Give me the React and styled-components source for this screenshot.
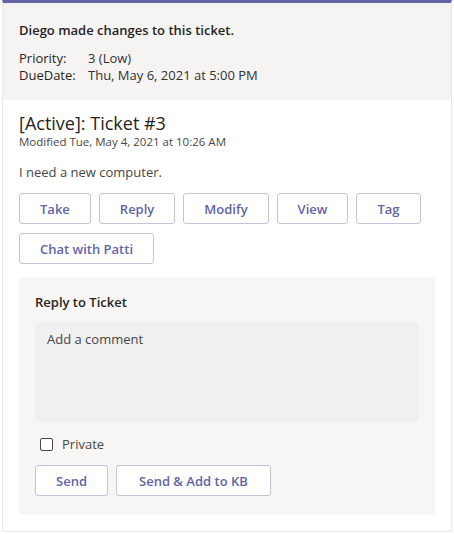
import React from "react";
import styled, { createGlobalStyle } from "styled-components";

const GlobalStyle = createGlobalStyle`
  html, body {
    margin: 0;
    padding: 0;
    background: #ffffff;
  }
  body {
    font-family: "Open Sans", "Noto Sans", sans-serif;
    color: #252423;
  }
`;

const actions = ["Take", "Reply", "Modify", "View", "Tag", "Chat with Patti"];

function App() {
  return (
    <>
      <GlobalStyle />
      <Page>
        <Card>
          <Header>
            <HeaderTitle>Diego made changes to this ticket.</HeaderTitle>
            <FactList>
              <FactLabel>Priority:</FactLabel>
              <FactValue>3 (Low)</FactValue>
              <FactLabel>DueDate:</FactLabel>
              <FactValue>Thu, May 6, 2021 at 5:00 PM</FactValue>
            </FactList>
          </Header>
          <Body>
            <TicketTitle>[Active]: Ticket #3</TicketTitle>
            <Modified>Modified Tue, May 4, 2021 at 10:26 AM</Modified>
            <Description>I need a new computer.</Description>
            <ActionRow>
              {actions.map((label) => (
                <ActionButton key={label}>{label}</ActionButton>
              ))}
            </ActionRow>
            <ReplyPanel>
              <ReplyTitle>Reply to Ticket</ReplyTitle>
              <CommentBox placeholder="Add a comment" />
              <CheckRow>
                <CheckBox type="checkbox" />
                <CheckLabel>Private</CheckLabel>
              </CheckRow>
              <SendRow>
                <ActionButton>Send</ActionButton>
                <ActionButton $pad="22px">Send &amp; Add to KB</ActionButton>
              </SendRow>
            </ReplyPanel>
          </Body>
        </Card>
      </Page>
    </>
  );
}

const Page = styled.div`
  width: 454px;
  height: 534px;
  padding: 0 2px 2px 2px;
  box-sizing: border-box;
`;

const Card = styled.div`
  width: 100%;
  height: 532px;
  box-sizing: border-box;
  border: 1px solid #ebe9e8;
  border-top: 3px solid #6264a7;
  border-radius: 0 0 3px 3px;
  background: #ffffff;
`;

const Header = styled.div`
  background: #f5f4f3;
  padding: 18px 16px 0 16px;
  height: 97px;
  box-sizing: border-box;
`;

const HeaderTitle = styled.div`
  font-size: 13px;
  font-weight: 600;
  line-height: 18px;
`;

const FactList = styled.div`
  display: grid;
  grid-template-columns: 69px 1fr;
  margin-top: 11px;
  font-size: 13px;
  line-height: 17px;
`;

const FactLabel = styled.div`
  font-weight: 400;
`;

const FactValue = styled.div`
  color: #323130;
`;

const Body = styled.div`
  padding: 12px 16px 0 16px;
`;

const TicketTitle = styled.div`
  font-size: 18px;
  line-height: 22px;
`;

const Modified = styled.div`
  font-size: 11.5px;
  line-height: 16px;
  color: #484644;
`;

const Description = styled.div`
  font-size: 13px;
  line-height: 18px;
  color: #484644;
  margin-top: 13px;
`;

const ActionRow = styled.div`
  display: flex;
  flex-wrap: wrap;
  gap: 9px 8px;
  margin-top: 12px;
  width: 420px;
`;

const ActionButton = styled.button`
  height: 31px;
  padding: 0 ${(props) => props.$pad || "20px"};
  box-sizing: border-box;
  background: #ffffff;
  border: 1px solid #c4c3dc;
  border-radius: 3px;
  font-family: "Open Sans", "Noto Sans", sans-serif;
  font-size: 13px;
  font-weight: 600;
  color: #6264a7;
  cursor: pointer;
`;

const ReplyPanel = styled.div`
  margin-top: 13px;
  width: 416px;
  height: 237px;
  box-sizing: border-box;
  background: #f7f6f5;
  padding: 16px 16px 0 16px;
  border-radius: 2px;
`;

const ReplyTitle = styled.div`
  font-size: 13px;
  font-weight: 600;
  line-height: 18px;
`;

const CommentBox = styled.textarea`
  display: block;
  margin-top: 11px;
  width: 384px;
  height: 100px;
  box-sizing: border-box;
  resize: none;
  border: none;
  border-radius: 3px;
  background: #f0f0f0;
  padding: 8px 12px;
  font-family: "Open Sans", "Noto Sans", sans-serif;
  font-size: 13px;
  color: #252423;
  outline: none;

  &::placeholder {
    color: #484644;
  }
`;

const CheckRow = styled.label`
  display: flex;
  align-items: center;
  gap: 9px;
  margin-top: 13px;
  padding-left: 5px;
`;

const CheckBox = styled.input`
  appearance: none;
  margin: 0;
  width: 13px;
  height: 13px;
  border: 1px solid #484644;
  border-radius: 2px;
  background: #ffffff;
`;

const CheckLabel = styled.span`
  font-size: 13px;
  line-height: 18px;
  color: #484644;
`;

const SendRow = styled.div`
  display: flex;
  gap: 8px;
  margin-top: 12px;
`;

export default App;
